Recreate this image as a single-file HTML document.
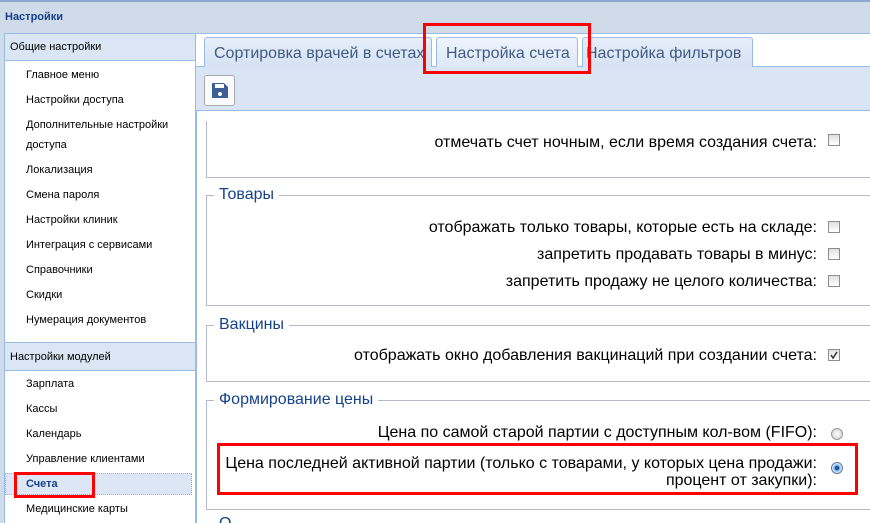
<!DOCTYPE html>
<html><head><meta charset="utf-8"><style>
*{margin:0;padding:0;box-sizing:border-box}
html,body{width:870px;height:523px;overflow:hidden}
body{background:#cfdbe8;font-family:"Liberation Sans","DejaVu Sans",sans-serif;position:relative}
.abs{position:absolute}
.title{left:5px;top:11px;font-size:11px;font-weight:bold;color:#15428b}
.side{left:4px;top:33px;width:192px;height:500px;background:#fff;border:1px solid #99bbe8}
.sh{position:absolute;left:0;width:190px;height:27px;background:#dae6f4;border-bottom:1px solid #99bbe8;font-size:11px;color:#000;padding:7px 0 0 5px}
.si{position:absolute;left:21px;font-size:11px;color:#000;white-space:nowrap}
.tabbar{left:196px;top:33px;width:674px;height:34px;background:#fff;border-top:1px solid #99bbe8;border-bottom:1px solid #99bbe8}
.tab{position:absolute;top:3px;height:31px;background:linear-gradient(#e6eef9,#d5e2f3);border:1px solid #99bbe8;border-bottom:none;border-radius:3px 3px 0 0;font-size:16px;color:#415a84;padding:7px 0 0 9px;white-space:nowrap;overflow:hidden}
.tb{left:196px;top:67px;width:674px;height:44px;background:#d9e5f4;border-bottom:1px solid #99bbe8}
.content{left:196px;top:111px;width:674px;height:412px;background:#fff;border-left:1px solid #99bbe8}
.fs{position:absolute;left:206px;width:680px;border:1px solid #b5b8c8}
.lg{position:absolute;left:214px;background:#fff;padding:0 5px;font-size:16px;color:#15428b}
.row{position:absolute;right:53px;font-size:16px;color:#000;text-align:right;white-space:nowrap}
.cb{position:absolute;left:828px;width:12px;height:12px;border:1px solid #8d8d8d;background:linear-gradient(#e0e0e0,#fff)}
.red{position:absolute;border:3px solid #f00}
</style></head><body>
<div class="abs" style="left:0;top:0;width:870px;height:2px;background:#8ea8cf"></div>
<div class="abs title">Настройки</div>
<div class="abs side">
<div class="sh" style="top:0">Общие настройки</div>
<div class="si" style="top:35px">Главное меню</div>
<div class="si" style="top:60px">Настройки доступа</div>
<div class="si" style="top:85px">Дополнительные настройки</div>
<div class="si" style="top:105px">доступа</div>
<div class="si" style="top:130px">Локализация</div>
<div class="si" style="top:155px">Смена пароля</div>
<div class="si" style="top:180px">Настройки клиник</div>
<div class="si" style="top:205px">Интеграция с сервисами</div>
<div class="si" style="top:230px">Справочники</div>
<div class="si" style="top:255px">Скидки</div>
<div class="si" style="top:280px">Нумерация документов</div>
<div class="sh" style="top:308px;border-top:1px solid #99bbe8;height:29px;padding-top:8px">Настройки модулей</div>
<div class="si" style="top:344px">Зарплата</div>
<div class="si" style="top:369px">Кассы</div>
<div class="si" style="top:394px">Календарь</div>
<div class="si" style="top:419px">Управление клиентами</div>
<div style="position:absolute;left:0;top:439px;width:187px;height:22px;background:#dce6f5;border:1px dotted #a0b4d0"></div>
<div class="si" style="top:444px;font-weight:bold;color:#15428b">Счета</div>
<div class="si" style="top:469px">Медицинские карты</div>
</div>
<div class="abs tabbar">
<div class="tab" style="left:8px;width:228px">Сортировка врачей в счетах</div>
<div class="tab" style="left:240px;width:142px;background:linear-gradient(#eef4fc,#dde8f6)">Настройка счета</div>
<div class="tab" style="left:386px;width:171px;padding-left:3px">Настройка фильтров</div>
</div>
<div class="abs tb"><div style="position:absolute;left:8px;top:8px;width:31px;height:31px;border:1px solid #a9a9a9;border-radius:3px;background:#fafbfd">
<svg width="29" height="29" viewBox="0 0 29 29"><path d="M7 7h12l4 4v11H7z" fill="#3d5f96"/><rect x="10" y="8" width="9" height="4" fill="#fff"/><circle cx="15" cy="18" r="2" fill="#fff"/></svg></div></div>
<div class="abs content"></div>
<div class="fs" style="top:121px;height:57px;border-top:none"></div>
<div class="row" style="top:134px">отмечать счет ночным, если время создания счета:</div>
<div class="cb" style="top:134px"></div>
<div class="fs" style="top:195px;height:111px"></div>
<div class="lg" style="top:186px">Товары</div>
<div class="row" style="top:219px">отображать только товары, которые есть на складе:</div><div class="cb" style="top:221px"></div>
<div class="row" style="top:246px">запретить продавать товары в минус:</div><div class="cb" style="top:248px"></div>
<div class="row" style="top:273px">запретить продажу не целого количества:</div><div class="cb" style="top:275px"></div>
<div class="fs" style="top:325px;height:57px"></div>
<div class="lg" style="top:316px">Вакцины</div>
<div class="row" style="top:347px">отображать окно добавления вакцинаций при создании счета:</div><div class="cb" style="top:349px"><svg width="10" height="10" style="position:absolute;left:0;top:0"><path d="M2 5l2 3 4-6" stroke="#333" stroke-width="1.5" fill="none"/></svg></div>
<div class="fs" style="top:400px;height:110px"></div>
<div class="lg" style="top:391px">Формирование цены</div>
<div class="row" style="top:424px">Цена по самой старой партии с доступным кол-вом (FIFO):</div>
<div class="abs" style="left:831px;top:428px;width:12px;height:12px;border-radius:50%;border:1px solid #999;background:radial-gradient(#fff,#ccc)"></div>
<div class="row" style="top:455px;line-height:17px">Цена последней активной партии (только с товарами, у которых цена продажи:<br>процент от закупки):</div>
<div class="abs" style="left:831px;top:462px;width:12px;height:12px;border-radius:50%;border:1px solid #5a7aa0;background:radial-gradient(#1a4f9a 25%,#6fb0e8 35%,#e8f2fb 70%)"></div>
<div class="fs" style="top:523px;height:20px"></div>
<div class="lg" style="top:515px">О</div>
<div class="red" style="left:423px;top:23px;width:168px;height:51px"></div>
<div class="red" style="left:14px;top:472px;width:81px;height:26px"></div>
<div class="red" style="left:217px;top:443px;width:641px;height:52px"></div>
</body></html>
